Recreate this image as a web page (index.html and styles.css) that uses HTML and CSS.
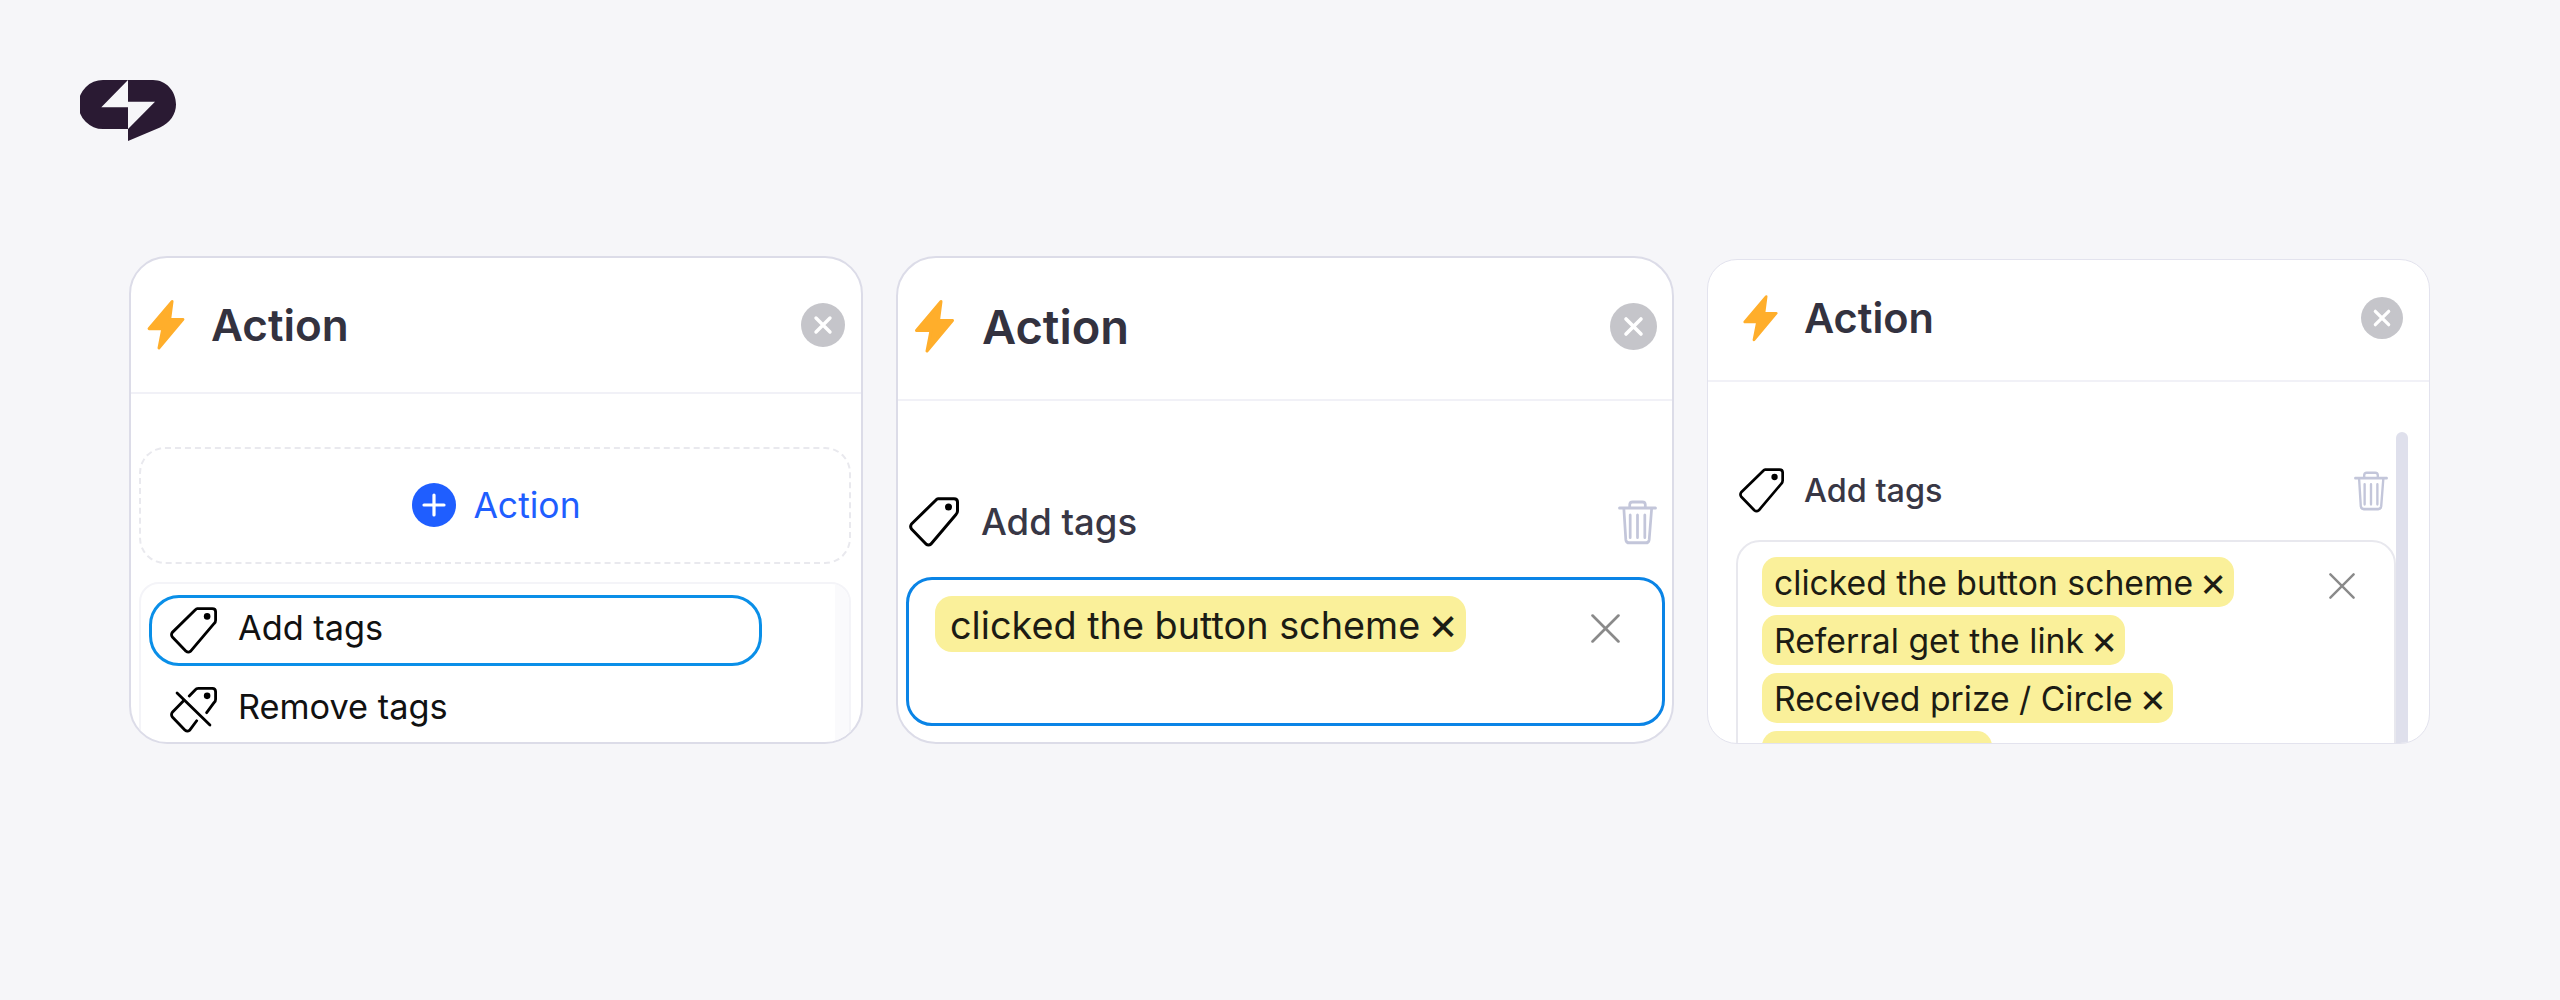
FILE: index.html
```html
<!DOCTYPE html>
<html lang="en">
<head>
    <meta charset="UTF-8">
    <meta name="viewport" content="width=device-width, initial-scale=1.0">
    <title>Action - Add tags</title>
    <link rel="stylesheet" href="styles.css">
</head>
<body>
    <!-- Shared icons -->
    <svg class="sprite" xmlns="http://www.w3.org/2000/svg">
        <symbol id="i-bolt" viewBox="0 0 40 54">
            <path d="M26.5 2.5 2 31.5H16.5L12.5 52 38 21.5H24Z" fill="#ffae2b" stroke="#ffae2b" stroke-width="3" stroke-linejoin="round"/>
        </symbol>
        <symbol id="i-close" viewBox="0 0 44 44">
            <circle cx="22" cy="22" r="22" fill="#c5c5ca"/>
            <path d="M15 15 29 29M29 15 15 29" stroke="#fff" stroke-width="3.4" stroke-linecap="round"/>
        </symbol>
        <symbol id="i-tag" viewBox="0 0 50 50">
            <path d="M29 1.8H45Q48.5 1.8 48.5 5V14Q48.5 16 47 17.5L22 47Q19.5 49 17 47L2.5 32Q0.8 29.5 2.5 27L27 3Q28 1.8 29 1.8Z" fill="none" stroke="#000" stroke-width="3" stroke-linejoin="round"/>
            <circle cx="39.5" cy="10" r="3.5" fill="#000"/>
        </symbol>
        <symbol id="i-tag-off" viewBox="0 0 50 50">
            <path d="M20.5 10.6 27 4Q28 2.5 30 2.5H45Q48.5 2.5 48.5 6V14Q48.5 16 47 17.5L39 28.4M14.2 16 2.5 28Q0.8 30.5 2.5 33L16 47Q18.5 49 21 47L28.4 37" fill="none" stroke="#000" stroke-width="3" stroke-linecap="round" stroke-linejoin="round"/>
            <circle cx="39.5" cy="10.5" r="3.5" fill="#000"/>
            <path d="M7.5 7.5 42.5 41.5" stroke="#000" stroke-width="3" stroke-linecap="round"/>
        </symbol>
        <symbol id="i-trash" viewBox="0 0 40 42" preserveAspectRatio="none">
            <path d="M1.5 7.5H38.5M12 7V4.5Q12 1.8 15 1.8H25Q28 1.8 28 4.5V7M6 8 8 37Q8.5 40 11.5 40H28.5Q31.5 40 32 37L34.5 8M12.5 14V35M20 14V35M27.5 14V35" fill="none" stroke="#c3c6da" stroke-width="2.8" stroke-linecap="round"/>
        </symbol>
        <symbol id="i-clear" viewBox="0 0 28 28">
            <path d="M1.5 1.5 26.5 26.5M26.5 1.5 1.5 26.5" stroke="#8a8a8a" stroke-width="2.6" stroke-linecap="round"/>
        </symbol>
    </svg>

    <!-- Logo -->
    <div class="top">
        <svg class="logo" viewBox="0 0 96 61" xmlns="http://www.w3.org/2000/svg">
            <path d="M48 0H23A24.5 24.5 0 0 0 23 49H48V27.3H21.3Z" fill="#2a1a33"/>
            <path d="M48 0H73C86 0 96 11 96 24.5 96 34 90 43 80 47.5L48 61V49L75 21.7H48Z" fill="#2a1a33"/>
        </svg>
    </div>

    <div class="cards">
        <!-- Picker -->
        <div class="card card-picker">
            <div class="card-head">
                <svg class="bolt"><use href="#i-bolt"/></svg>
                <h2>Action</h2>
                <svg class="close"><use href="#i-close"/></svg>
            </div>
            <div class="add-action">
                <svg class="plus" viewBox="0 0 44 44">
                    <circle cx="22" cy="22" r="22" fill="#1f5eff"/>
                    <path d="M12 22H32M22 12V32" stroke="#fff" stroke-width="3.2" stroke-linecap="round"/>
                </svg>
                <span>Action</span>
            </div>
            <div class="action-list">
                <div class="action-items">
                    <div class="action-item selected">
                        <svg class="tag"><use href="#i-tag"/></svg>
                        <span>Add tags</span>
                    </div>
                    <div class="action-item">
                        <svg class="tag"><use href="#i-tag-off"/></svg>
                        <span>Remove tags</span>
                    </div>
                </div>
                <div class="list-track"></div>
            </div>
        </div>

        <!-- Focused input -->
        <div class="card card-focus">
            <div class="card-head">
                <svg class="bolt"><use href="#i-bolt"/></svg>
                <h2>Action</h2>
                <svg class="close"><use href="#i-close"/></svg>
            </div>
            <div class="tag-row">
                <svg class="tag"><use href="#i-tag"/></svg>
                <span>Add tags</span>
                <svg class="trash"><use href="#i-trash"/></svg>
            </div>
            <div class="tag-input">
                <div class="chips">
                    <span class="chip">clicked the button scheme <b>×</b></span>
                </div>
                <svg class="clear"><use href="#i-clear"/></svg>
            </div>
        </div>

        <!-- Filled input -->
        <div class="card card-filled">
            <div class="card-head">
                <svg class="bolt"><use href="#i-bolt"/></svg>
                <h2>Action</h2>
                <svg class="close"><use href="#i-close"/></svg>
            </div>
            <div class="filled-body">
                <div class="filled-main">
                    <div class="tag-row">
                        <svg class="tag"><use href="#i-tag"/></svg>
                        <span>Add tags</span>
                        <svg class="trash"><use href="#i-trash"/></svg>
                    </div>
                    <div class="tag-input">
                        <div class="chips">
                            <span class="chip">clicked the button scheme <b>×</b></span>
                            <span class="chip">Referral get the link <b>×</b></span>
                            <span class="chip">Received prize / Circle <b>×</b></span>
                            <span class="chip chip-cut"></span>
                        </div>
                        <svg class="clear"><use href="#i-clear"/></svg>
                    </div>
                </div>
                <div class="scroll-thumb"></div>
            </div>
        </div>
    </div>
</body>
</html>
```

FILE: styles.css
```css
/* General Styles */
body {
    font-family: Inter, "Liberation Sans", sans-serif;
    background-color: #f6f6f9;
    margin: 0;
    padding: 0;
    height: 1000px;
    overflow: hidden;
}

.sprite {
    display: none;
}

.top {
    padding: 80px 0 0 80px;
}

.logo {
    display: block;
    width: 96px;
    height: 61px;
}

/* Cards */
.cards {
    display: flex;
    align-items: flex-end;
    gap: 33px;
    margin-top: 115px;
    padding-left: 129px;
}

.card {
    box-sizing: border-box;
    background-color: #ffffff;
    border: 2px solid #dcdce8;
    overflow: hidden;
    flex: none;
}

.card-head {
    display: flex;
    align-items: center;
    box-sizing: border-box;
    border-bottom: 2px solid #f1f1f7;
}

.card-head h2 {
    margin: 0;
    color: #33323f;
    font-weight: 600;
}

.close {
    margin-left: auto;
}

.tag-row {
    display: flex;
    align-items: center;
    color: #383745;
    font-weight: 500;
}

.trash {
    margin-left: auto;
}

.tag-input {
    display: flex;
    justify-content: space-between;
    align-items: flex-start;
    box-sizing: border-box;
    background-color: #ffffff;
}

.chips {
    display: flex;
    flex-direction: column;
    align-items: flex-start;
}

.chip {
    display: flex;
    align-items: center;
    box-sizing: border-box;
    padding-top: 1px;
    background-color: #faf09a;
    color: #1c1c14;
    white-space: pre;
}

.chip b {
    margin: -4px 0 0 -3px;
    font-size: 1.22em;
    font-weight: 400;
    line-height: 0;
}

/* Picker card */
.card-picker {
    width: 734px;
    height: 488px;
    border-radius: 38px;
}

.card-picker .card-head {
    height: 135.5px;
    padding: 0 16px 0.5px 16px;
    gap: 26px;
}

.card-picker h2 {
    font-size: 44px;
}

.card-picker .bolt {
    width: 38px;
    height: 51px;
}

.card-picker .close {
    width: 44px;
    height: 44px;
}

.add-action {
    display: flex;
    align-items: center;
    justify-content: center;
    gap: 17px;
    box-sizing: border-box;
    width: 712px;
    height: 117px;
    margin: 53px 0 0 8px;
    padding-left: 3px;
    border: 2px dashed #e9e9ee;
    border-radius: 26px;
    color: #1f5eff;
    font-size: 35.5px;
}

.plus {
    width: 44px;
    height: 44px;
}

.action-list {
    display: flex;
    box-sizing: border-box;
    width: 712px;
    height: 200px;
    margin: 18px 0 0 8px;
    border: 2px solid #f4f4f8;
    border-radius: 20px;
    overflow: hidden;
}

.action-items {
    flex: 1;
    padding: 11px 0 0 8px;
}

.list-track {
    width: 14px;
    background-color: #fafafc;
}

.action-item {
    display: flex;
    align-items: center;
    gap: 21px;
    box-sizing: border-box;
    width: 613px;
    height: 71px;
    margin-bottom: 8px;
    padding-left: 21px;
    color: #111111;
    font-size: 34.3px;
}

.action-item span {
    margin-top: -6px;
}

.action-item.selected {
    padding-left: 18px;
    border: 3px solid #0a8fe8;
    border-radius: 30px;
}

.action-item .tag {
    width: 47px;
    height: 47px;
}

/* Focused card */
.card-focus {
    width: 778px;
    height: 488px;
    border-radius: 40px;
}

.card-focus .card-head {
    height: 143px;
    padding: 0 15px 5px 16px;
    gap: 27px;
}

.card-focus h2 {
    font-size: 47px;
}

.card-focus .bolt {
    width: 41px;
    height: 54px;
}

.card-focus .close {
    width: 47px;
    height: 47px;
}

.card-focus .tag-row {
    gap: 22px;
    margin-top: 96px;
    padding: 0 15px 0 11px;
    font-size: 36.5px;
}

.card-focus .tag {
    width: 50px;
    height: 50px;
}

.card-focus .trash {
    width: 39px;
    height: 45px;
}

.card-focus .tag-input {
    width: 759px;
    height: 149px;
    margin: 30px 0 0 8px;
    padding: 16px 42px 0 26px;
    border: 3.5px solid #0a84e6;
    border-radius: 26px;
}

.card-focus .chip {
    height: 56px;
    padding-left: 15px;
    padding-right: 8px;
    border-radius: 17px;
    font-size: 37.8px;
}

.card-focus .clear {
    width: 29px;
    height: 29px;
    margin-top: 18px;
}

/* Filled card */
.card-filled {
    width: 723px;
    height: 485px;
    border-width: 1.5px;
    border-color: #e3e3ee;
    border-radius: 30px;
}

.card-filled .card-head {
    height: 122px;
    padding: 0 26px 5px 35px;
    gap: 26px;
}

.card-filled h2 {
    font-size: 41.5px;
}

.card-filled .bolt {
    width: 35px;
    height: 48px;
}

.card-filled .close {
    width: 42px;
    height: 42px;
}

.filled-body {
    display: flex;
    align-items: flex-start;
    padding-left: 28px;
}

.filled-main {
    width: 660px;
    padding-top: 86px;
}

.scroll-thumb {
    width: 12px;
    height: 320px;
    margin-top: 50px;
    border-radius: 6px 6px 0 0;
    background-color: #dfe0ec;
}

.card-filled .tag-row {
    gap: 20px;
    padding: 0 8px 0 3px;
    font-size: 32.4px;
}

.card-filled .tag {
    width: 45px;
    height: 45px;
}

.card-filled .trash {
    width: 34px;
    height: 40px;
}

.card-filled .tag-input {
    height: 300px;
    margin-top: 27px;
    padding: 15px 39px 0 24px;
    border: 2px solid #e8e8ee;
    border-radius: 24px;
}

.card-filled .chips {
    gap: 8px;
}

.card-filled .chip {
    height: 50px;
    padding-left: 12px;
    padding-right: 7px;
    border-radius: 15px;
    font-size: 33.7px;
}

.card-filled .chip-cut {
    width: 230px;
}

.card-filled .clear {
    width: 26px;
    height: 26px;
    margin-top: 16px;
}
```
